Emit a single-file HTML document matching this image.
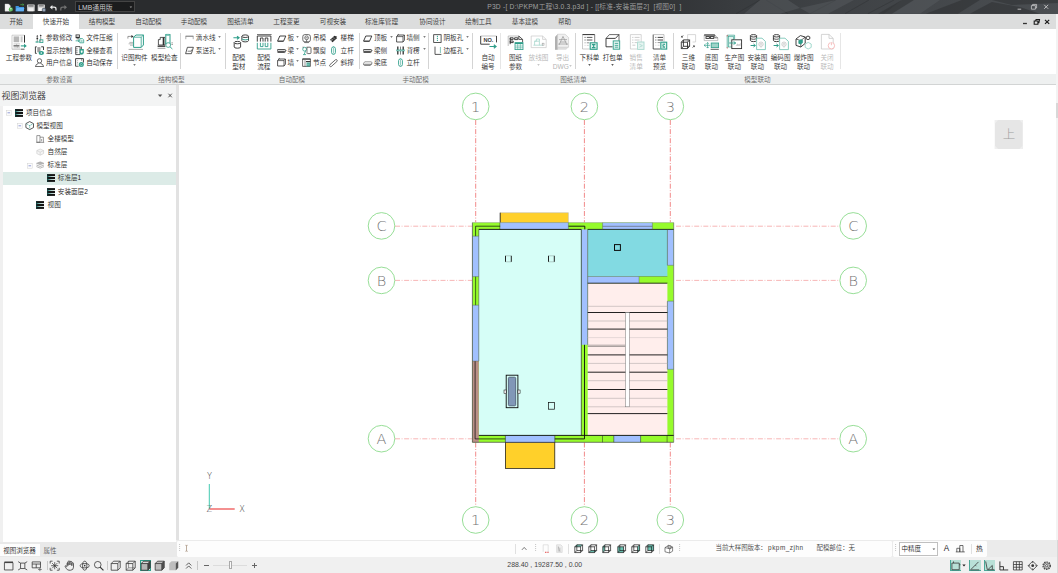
<!DOCTYPE html>
<html lang="zh-CN">
<head>
<meta charset="utf-8">
<title>P3D - PKPM</title>
<style>
html,body{margin:0;padding:0;background:#f0f0f0;}
body{width:1058px;height:573px;overflow:hidden;position:relative;font-family:"Liberation Sans","Noto Sans CJK SC",sans-serif;-webkit-font-smoothing:antialiased;}
#app{position:absolute;left:0;top:0;width:1058px;height:573px;overflow:hidden;}
.b{position:absolute;display:block;overflow:visible;}
.t{position:absolute;white-space:nowrap;line-height:1;letter-spacing:0;font-weight:350;}
.t.c{transform:translate(-50%,-50%);}
.t.l{transform:translate(0,-50%);}
</style>
</head>
<body>
<div id="app">
<div id="titlebar">
<div class="b " style="left:0px;top:0px;width:1058px;height:13.7px;background:#2a2c2e;"></div>
<div class="b " style="left:600px;top:0px;width:458px;height:13.7px;background:linear-gradient(to right, rgba(80,84,88,0) 0%, rgba(70,74,78,.55) 30%, rgba(80,84,88,.85) 100%);"></div>
<svg class="b" style="left:640px;top:0px" width="418" height="13.7" viewBox="0 0 418 13.7">
<g stroke="#2c2e30" stroke-width=".5" opacity=".8" fill="none">
<path d="M96,13.700l24,-13.700M126,0l22,13.700M170,13.700l26,-13.700M205,13.700l24,-13.700M228,13.700l26,-13.700"/>
</g>
<g fill="#5a5e62" opacity=".45">
<polygon points="120,0 148,0 160,8 140,13.700 104,13.700"/>
<polygon points="160,8 196,0 214,0 188,13.700 170,13.700"/>
<polygon points="262,0 300,0 280,13.700 244,13.700"/>
</g>
<g fill="#2e3032" opacity=".55">
<polygon points="238,13.700 262,0 274,0 252,13.700"/>
<polygon points="286,13.700 322,0 340,0 318,13.700"/>
<polygon points="330,13.700 352,2 380,7 400,13.700"/>
<polygon points="352,0 418,0 418,3 372,5"/>
</g>
</svg>
<svg class="b" style="left:4px;top:2.6px" width="66" height="10" viewBox="0 0 66 10">
<path d="M1,1h3.600l1.800,1.800v5.400h-5.400z" fill="#f4f4f4" stroke="#c8c8c8" stroke-width=".4"/>
<circle cx="6.900" cy="6.400" r="2.100" fill="#4db04a"/><path d="M6.900,7.600v-2.400m-1,.9l1,-1l1,1" stroke="#fff" stroke-width=".5" fill="none"/>
<path d="M11.600,2.900h2.800l.9,1h4.700v4.400h-8.400z" fill="#3f97e6"/><path d="M12.600,4.900h7.800l-1,3.400h-7.800z" fill="#62b0f4"/>
<path d="M16.300,1.700h3.400m-1.100,-1l1.200,1l-1.200,1" stroke="#4db04a" stroke-width=".7" fill="none"/>
<rect x="23.100" y="1.400" width="7.600" height="6.800" rx=".5" fill="#d4d4d4"/>
<rect x="24.200" y="1.400" width="5.400" height="2.400" fill="#8a8a8a"/>
<rect x="24.400" y="5.200" width="5" height="3" fill="#f2f2f2"/>
<rect x="33.700" y="1.400" width="7.200" height="6.600" rx=".5" fill="#d4d4d4"/>
<rect x="34.700" y="1.400" width="5" height="2.200" fill="#8a8a8a"/>
<rect x="34.900" y="5" width="3.600" height="3" fill="#f2f2f2"/>
<circle cx="40" cy="7" r="1.900" fill="#7a8ea6" stroke="#2a2c2e" stroke-width=".4"/><circle cx="40" cy="7" r=".7" fill="#d8d8d8"/>
<path d="M47,4.200h3q2,0 2,1.800v1.400" stroke="#ececec" stroke-width="1.200" fill="none"/>
<path d="M48.400,2l-2.600,2.200l2.600,2.200z" fill="#ececec"/>
<path d="M61.800,4.200h-3q-2,0 -2,1.800v1.400" stroke="#727272" stroke-width="1.200" fill="none"/>
<path d="M60.400,2l2.600,2.200l-2.600,2.200z" fill="#727272"/>
</svg>
<div class="b " style="left:75.2px;top:1.3px;width:59.8px;height:10.9px;background:#1b1c1d;border:0.5px solid #444;box-sizing:border-box"></div>
<div class="t l " style="left:78.2px;top:7.5px;font-size:6.8px;color:#d0d0d0;">LMB通用版</div>
<svg class="b" style="left:128.5px;top:6px" width="4" height="3" viewBox="0 0 4 3"><path d="M0.6,0.6l1.3,1.4l1.3,-1.4z" fill="#9a9a9a"/></svg>
<div class="t c ttl" style="left:584.4px;top:6.5px;font-size:6.7px;color:#a0a0a0;letter-spacing:.22px;">P3D -[ D:\PKPM工程\3.0.3.p3d ] - [[标准-安装面层2]&nbsp; [视图0]&nbsp; ]</div>
<svg class="b" style="left:1014px;top:2px" width="40" height="10" viewBox="0 0 40 10">
<path d="M3.6,7.2h3.6" stroke="#c8c8c8" stroke-width=".9"/>
<path d="M17.4,3.6h4v3.6h-4z M18.6,3.6v-1.2h4v3.6h-1.2" stroke="#c8c8c8" stroke-width=".8" fill="none"/>
<path d="M30.2,2.8l4,4m0,-4l-4,4" stroke="#c8c8c8" stroke-width=".9"/>
</svg>
</div>
<div id="tabs">
<div class="b " style="left:0px;top:13.7px;width:1058px;height:15px;background:#dcdddd;"></div>
<div class="b " style="left:33px;top:14.4px;width:46px;height:14.4px;background:#ffffff;"></div>
<div class="t c " style="left:16px;top:21.8px;font-size:6.6px;color:#333;">开始</div>
<div class="t c " style="left:56px;top:21.8px;font-size:6.6px;color:#333;">快速开始</div>
<div class="t c " style="left:102px;top:21.8px;font-size:6.6px;color:#333;">结构模型</div>
<div class="t c " style="left:148.5px;top:21.8px;font-size:6.6px;color:#333;">自动配模</div>
<div class="t c " style="left:194px;top:21.8px;font-size:6.6px;color:#333;">手动配模</div>
<div class="t c " style="left:240.5px;top:21.8px;font-size:6.6px;color:#333;">图纸清单</div>
<div class="t c " style="left:286.5px;top:21.8px;font-size:6.6px;color:#333;">工程变更</div>
<div class="t c " style="left:333px;top:21.8px;font-size:6.6px;color:#333;">可视安装</div>
<div class="t c " style="left:381.5px;top:21.8px;font-size:6.6px;color:#333;">标准库管理</div>
<div class="t c " style="left:432.5px;top:21.8px;font-size:6.6px;color:#333;">协同设计</div>
<div class="t c " style="left:478.5px;top:21.8px;font-size:6.6px;color:#333;">绘制工具</div>
<div class="t c " style="left:525px;top:21.8px;font-size:6.6px;color:#333;">基本建模</div>
<div class="t c " style="left:564.5px;top:21.8px;font-size:6.6px;color:#333;">帮助</div>
<svg class="b" style="left:1018px;top:16px" width="36" height="10" viewBox="0 0 36 10">
<path d="M5,7.500h3.900" stroke="#333" stroke-width="1.300"/>
<path d="M16.200,5h3.700v3.200h-3.700z M17.600,5l.5,-1.500h3.400l-.6,3.200h-1" stroke="#1a1a1a" stroke-width="1.100" fill="none"/>
<path d="M27,3.900l4.200,4m0,-4l-4.200,4" stroke="#1a1a1a" stroke-width="1.200"/>
</svg>
</div>
<div id="ribbon">
<div class="b " style="left:0px;top:28.7px;width:1058px;height:45.3px;background:#ffffff;"></div>
<div class="b " style="left:0px;top:73.9px;width:1058px;height:10.1px;background:#eef0f0;"></div>
<div class="b " style="left:0px;top:84px;width:1058px;height:0.9px;background:#d2d4d4;"></div>
<svg class="b" style="left:10.5px;top:34.5px" width="17" height="15.5" viewBox="0 0 17 15.5">
<path d="M1,14.200v-14h12.500" fill="none" stroke="#b0b0b0" stroke-width=".6"/>
<path d="M1,14.200h9" stroke="#9a9a9a" stroke-width=".6"/><path d="M10,14.200h3.500" stroke="#2e2e2e" stroke-width=".8"/>
<path d="M13.500,.2v7.400" stroke="#2e2e2e" stroke-width="1"/>
<rect x="2.600" y="1.400" width="5.600" height="5.800" fill="#b6b6b6"/>
<rect x="9.600" y="1.400" width="2" height="5.800" fill="#c8c8c8"/>
<path d="M2.500,8.900h6.500M2.500,12.800h6.500M5.600,8.900v1.200M6.400,11.600v1.200" stroke="#9a9a9a" stroke-width=".5"/>
<path d="M2.500,10.900h6" stroke="#2e2e2e" stroke-width="1"/>
<path d="M9.800,10.900h4.600" stroke="#2f9e8a" stroke-width="1.100"/><path d="M13,8.700l2.800,2.200l-2.800,2.200z" fill="#2f9e8a"/>
</svg>
<div class="t c " style="left:19px;top:57.7px;font-size:6.6px;color:#262626;">工程参数</div>
<svg class="b" style="left:35.2px;top:33.6px" width="9" height="9" viewBox="0 0 9 9"><path d="M2.300,1.200v6.600M5.700,1.200v6.600" stroke="#2e2e2e" stroke-width=".5"/><path d="M1.300,2.600l1,-1.400l1,1.400zM4.700,2l1,-1.400l1,1.400z" fill="#2e2e2e"/><rect x="1.500" y="3.800" width="1.600" height="1.400" fill="#2e2e2e"/><path d="M.6,7.400h3v1.200h-3z" fill="#2f9e8a"/><rect x="4.700" y="5.800" width="3.200" height="2.800" fill="none" stroke="#2f9e8a" stroke-width=".8"/></svg>
<div class="t l " style="left:46px;top:38.2px;font-size:6.6px;color:#262626;">参数修改</div>
<svg class="b" style="left:35.2px;top:46.0px" width="9" height="9" viewBox="0 0 9 9"><path d="M1.700,.8h-1.300v6.600h1.300" stroke="#2e2e2e" stroke-width=".9" fill="none"/><rect x="2.400" y="1.200" width="3" height="5" fill="#8c8c8c"/><path d="M3.300,1.200v5M4.400,1.200v5" stroke="#c8c8c8" stroke-width=".4"/><path d="M6.200,.8h2.300v3.200" stroke="#2e2e2e" stroke-width=".9" fill="none"/><ellipse cx="6.300" cy="7" rx="2.700" ry="1.900" fill="#2f9e8a"/><circle cx="6.300" cy="7" r=".8" fill="#fff"/></svg>
<div class="t l " style="left:46px;top:50.6px;font-size:6.6px;color:#262626;">显示控制</div>
<svg class="b" style="left:35.2px;top:58.1px" width="9" height="9" viewBox="0 0 9 9"><circle cx="4.500" cy="2.900" r="2.200" fill="none" stroke="#2e2e2e" stroke-width=".7"/><path d="M.5,8.500q.2,-2.300 2.600,-2.900l.6,-1M8.500,8.500q-.2,-2.300 -2.600,-2.900l-.6,-1M.3,8.500h8.400" fill="none" stroke="#2e2e2e" stroke-width=".7"/></svg>
<div class="t l " style="left:46px;top:62.7px;font-size:6.6px;color:#262626;">用户信息</div>
<svg class="b" style="left:75.39999999999999px;top:33.6px" width="9" height="9" viewBox="0 0 9 9"><rect x=".6" y=".5" width="4.200" height="3.600" fill="#2e2e2e"/><rect x="1.400" y="1.200" width="2.600" height="1.700" fill="#d8d8d8"/><path d="M1.600,4.800h2.400" stroke="#2e2e2e" stroke-width=".7"/><path d="M.6,6.800h3.600m-1.200,-1.100l1.300,1.100l-1.300,1.100" stroke="#2f9e8a" stroke-width=".8" fill="none"/><path d="M4.800,4.600h2.600l1.300,1.200v3h-3.900z" fill="#fff" stroke="#2f9e8a" stroke-width=".8"/><path d="M6,6.400h1.600M6,7.600h1.600" stroke="#2f9e8a" stroke-width=".5"/></svg>
<div class="t l " style="left:86.2px;top:38.2px;font-size:6.6px;color:#262626;">文件压缩</div>
<svg class="b" style="left:75.39999999999999px;top:46.0px" width="9" height="9" viewBox="0 0 9 9"><path d="M.7,.6h4.400v8h-4.400z" stroke="#2e2e2e" stroke-width=".8" fill="#fff"/><path d="M.7,2.800h2M.7,4.800h2M.7,6.700h2" stroke="#2e2e2e" stroke-width=".5"/><path d="M6.500,.6v2.400" stroke="#2e2e2e" stroke-width=".7"/><path d="M4.600,3h4.200v3.400q0,1.600 -2.100,2.400q-2.100,-.8 -2.100,-2.400z" fill="#2f9e8a"/><path d="M5.800,4.400h1.800v1.800l-.9,.9l-.9,-.9z" fill="#fff"/></svg>
<div class="t l " style="left:86.2px;top:50.6px;font-size:6.6px;color:#262626;">全楼查看</div>
<svg class="b" style="left:75.39999999999999px;top:58.1px" width="9" height="9" viewBox="0 0 9 9"><path d="M.6,8.300v-7.700h7.800v4" stroke="#2e2e2e" stroke-width=".9" fill="none"/><path d="M.6,8.300h3" stroke="#2e2e2e" stroke-width=".7"/><path d="M2.600,2.400v5" stroke="#2e2e2e" stroke-width=".5" stroke-dasharray=".8 .8"/><path d="M6.600,.8v2" stroke="#2e2e2e" stroke-width=".5"/><circle cx="6.300" cy="6.600" r="2.500" fill="#2f9e8a"/><path d="M5.200,6.600a1.100,1.100 0 0 1 2.000,-.600M7.400,6.700a1.100,1.100 0 0 1 -2.000,.600" stroke="#fff" stroke-width=".5" fill="none"/></svg>
<div class="t l " style="left:86.2px;top:62.7px;font-size:6.6px;color:#262626;">自动保存</div>
<div class="b " style="left:117.35px;top:33px;width:0.6px;height:35.5px;background:#d4d4d4;"></div>
<svg class="b" style="left:126.5px;top:34px" width="18" height="16" viewBox="0 0 18 16">
<path d="M6.600,3.200l2.400,-2.200h7.400v10l-2.200,2.400h-7.600z" fill="#fff" stroke="#2f9e8a" stroke-width="1"/>
<path d="M6.600,3.200h7.600l2.200,-2.200M14.200,3.200v10.200" stroke="#2f9e8a" stroke-width=".8" fill="none"/>
<path d="M.9,4.600v-2.200h4" stroke="#555" stroke-width=".6" fill="none"/>
<path d="M4.400,.9l2.200,1.500l-2.200,1.500z" fill="#2e2e2e"/>
<path d="M2.400,8.400h3.600M1.600,9.800h4.400M3,11.200h3" stroke="#9a9a9a" stroke-width=".7"/>
<path d="M1.600,15.400h14.400" stroke="#8a8a8a" stroke-width=".7"/>
</svg>
<div class="t c " style="left:134.5px;top:57.7px;font-size:6.6px;color:#262626;">识图构件</div>
<svg class="b" style="left:133.0px;top:64px" width="3" height="2" viewBox="0 0 3 2"><path d="M0.2,0.3h2.6l-1.3,1.5z" fill="#555"/></svg>
<svg class="b" style="left:155.5px;top:34px" width="18" height="16" viewBox="0 0 18 16">
<path d="M2.400,11v-5.400h1.800v-2.200h4.800v7.600z" fill="#fff" stroke="#2e2e2e" stroke-width=".8"/>
<path d="M7.400,3.400v7.600" stroke="#2e2e2e" stroke-width="1.400"/>
<path d="M1.600,12.200h7.800" stroke="#2e2e2e" stroke-width="1.300"/><path d="M1.600,14.300h7.800" stroke="#777" stroke-width=".7"/>
<rect x="9.800" y=".6" width="4.200" height="9" fill="#fff" stroke="#2f9e8a" stroke-width="1"/>
<ellipse cx="11.900" cy=".9" rx="2.100" ry=".6" fill="#bfe6de" stroke="#2f9e8a" stroke-width=".5"/>
<circle cx="12.200" cy="11" r="2.400" fill="#fff" fill-opacity=".85" stroke="#2f9e8a" stroke-width=".8"/>
<path d="M14,12.800l2.400,2.200" stroke="#2f9e8a" stroke-width=".9"/>
<path d="M16.100,8.400v3" stroke="#2e2e2e" stroke-width=".7" stroke-dasharray="1 .6"/>
</svg>
<div class="t c " style="left:164.3px;top:57.7px;font-size:6.6px;color:#262626;">模型检查</div>
<div class="b " style="left:180.25px;top:33px;width:0.6px;height:35.5px;background:#d4d4d4;"></div>
<svg class="b" style="left:184.6px;top:33.6px" width="9" height="9" viewBox="0 0 9 9"><path d="M.6,2.200h7.800" stroke="#2e2e2e" stroke-width=".7" fill="none"/><path d="M.8,2.200v3M8.200,2.200v3" stroke="#777" stroke-width=".6" fill="none"/></svg>
<div class="t l " style="left:195.8px;top:38.2px;font-size:6.6px;color:#262626;">滴水线</div>
<svg class="b" style="left:218.2px;top:35.900000000000006px" width="3" height="2" viewBox="0 0 3 2"><path d="M0.2,0.3h2.6l-1.3,1.5z" fill="#555"/></svg>
<svg class="b" style="left:184.6px;top:46.0px" width="9" height="9" viewBox="0 0 9 9"><path d="M2.400,1.300h6l-2,6.400h-5.800z" stroke="#2e2e2e" stroke-width=".8" fill="none"/><path d="M2.600,5.200h3.600l.5,-1.600" stroke="#2e2e2e" stroke-width=".6" fill="none"/></svg>
<div class="t l " style="left:195.8px;top:50.6px;font-size:6.6px;color:#262626;">泵送孔</div>
<svg class="b" style="left:218.2px;top:48.300000000000004px" width="3" height="2" viewBox="0 0 3 2"><path d="M0.2,0.3h2.6l-1.3,1.5z" fill="#555"/></svg>
<div class="b " style="left:224.95px;top:33px;width:0.6px;height:35.5px;background:#d4d4d4;"></div>
<svg class="b" style="left:230.5px;top:34px" width="18" height="16" viewBox="0 0 18 16">
<path d="M2.400,3.800h5.600m-2,-1.600l2.100,1.600l-2.100,1.600" stroke="#2f9e8a" stroke-width="1.100" fill="none"/>
<path d="M10.900,2.200v4.400a3.300,1.300 0 0 0 6.600,0v-4.400" fill="#fff" stroke="#2e2e2e" stroke-width=".9"/>
<ellipse cx="14.200" cy="2.200" rx="3.300" ry="1.300" fill="#fff" stroke="#2e2e2e" stroke-width=".9"/>
<path d="M10.900,4.600a3.300,1.300 0 0 0 6.600,0" fill="none" stroke="#2f9e8a" stroke-width="1"/>
<path d="M3.200,8.600v4.400a3.200,1.200 0 0 0 6.400,0v-4.400" fill="#fff" stroke="#2e2e2e" stroke-width=".9"/>
<ellipse cx="6.400" cy="8.600" rx="3.200" ry="1.200" fill="#fff" stroke="#2e2e2e" stroke-width=".9"/>
</svg>
<div class="t c " style="left:238.8px;top:57.7px;font-size:6.6px;color:#262626;">配模</div>
<div class="t c " style="left:238.8px;top:67.1px;font-size:6.6px;color:#262626;">型材</div>
<svg class="b" style="left:255.5px;top:34px" width="17" height="16" viewBox="0 0 17 16">
<path d="M1,.6h14.600" stroke="#2e2e2e" stroke-width=".7"/>
<path d="M1.300,7.600v-5.600h13.600v5.600M4.400,7.600v-3.600h2.600v3.600M9.200,7.600v-3.600h2.600v3.600" fill="none" stroke="#2e2e2e" stroke-width=".9"/>
<path d="M1.300,8.800v6.200h13.600v-6.200M4.400,8.800v3.800h2.600v-3.800M9.200,8.800v3.800h2.600v-3.800" fill="none" stroke="#2f9e8a" stroke-width=".9"/>
</svg>
<div class="t c " style="left:263.8px;top:57.7px;font-size:6.6px;color:#262626;">配模</div>
<div class="t c " style="left:263.8px;top:67.1px;font-size:6.6px;color:#262626;">流程</div>
<svg class="b" style="left:276.6px;top:33.6px" width="9" height="9" viewBox="0 0 9 9"><path d="M2.800,2h6l-2.200,5h-6z" stroke="#2e2e2e" stroke-width=".9" fill="#fff"/><path d="M.6,7.500h6" stroke="#2e2e2e" stroke-width=".7"/></svg>
<div class="t l " style="left:287.4px;top:38.2px;font-size:6.6px;color:#262626;">板</div>
<svg class="b" style="left:296.1px;top:35.900000000000006px" width="3" height="2" viewBox="0 0 3 2"><path d="M0.2,0.3h2.6l-1.3,1.5z" fill="#555"/></svg>
<svg class="b" style="left:276.6px;top:46.0px" width="9" height="9" viewBox="0 0 9 9"><path d="M.5,3.600h7.400q1,.2 1,.9t-1,.9h-7.400" stroke="#2e2e2e" stroke-width=".9" fill="#fff"/><path d="M.5,3.600v1.800" stroke="#2e2e2e" stroke-width=".6"/><path d="M.5,6.500h7.200l1,-.8" stroke="#2e2e2e" stroke-width=".8" fill="none"/></svg>
<div class="t l " style="left:287.4px;top:50.6px;font-size:6.6px;color:#262626;">梁</div>
<svg class="b" style="left:296.1px;top:48.300000000000004px" width="3" height="2" viewBox="0 0 3 2"><path d="M0.2,0.3h2.6l-1.3,1.5z" fill="#555"/></svg>
<svg class="b" style="left:276.6px;top:58.1px" width="9" height="9" viewBox="0 0 9 9"><path d="M.6,2.600l1.400,-1.600h6.400v5.200l-1.400,1.800h-6.400z" stroke="#2e2e2e" stroke-width=".8" fill="#fff"/><path d="M.6,2.600h6.400l1.400,-1.600M7,2.600v5.400" stroke="#2e2e2e" stroke-width=".7" fill="none"/><path d="M1,1.400l1.400,-1l.8,.8" stroke="#2e2e2e" stroke-width=".6" fill="none"/></svg>
<div class="t l " style="left:287.4px;top:62.7px;font-size:6.6px;color:#262626;">墙</div>
<svg class="b" style="left:296.1px;top:60.400000000000006px" width="3" height="2" viewBox="0 0 3 2"><path d="M0.2,0.3h2.6l-1.3,1.5z" fill="#555"/></svg>
<svg class="b" style="left:302.0px;top:33.6px" width="9" height="9" viewBox="0 0 9 9"><rect x=".8" y=".6" width="7.600" height="7.200" rx="2" fill="none" stroke="#2e2e2e" stroke-width=".7"/><circle cx="4.600" cy="3.800" r="1.900" fill="none" stroke="#2e2e2e" stroke-width=".6"/><path d="M3.400,3.800h2.400M2.600,7.800v.8h4v-.8M4.600,5.700v2" stroke="#2e2e2e" stroke-width=".6" fill="none"/></svg>
<div class="t l " style="left:313px;top:38.2px;font-size:6.6px;color:#262626;">吊模</div>
<svg class="b" style="left:302.0px;top:46.0px" width="9" height="9" viewBox="0 0 9 9"><circle cx="2.600" cy="3.200" r="1.900" fill="none" stroke="#2f9e8a" stroke-width=".8"/><path d="M3.600,4.800l-1.400,3.600M1,8.600h3" stroke="#2f9e8a" stroke-width=".8"/><path d="M.6,1.200h1M4.600,1.200h3.400q1,0 1,1v4.400q0,1 -1,1h-2.600" stroke="#2e2e2e" stroke-width=".7" fill="none"/><path d="M5,1.200v6.400" stroke="#2e2e2e" stroke-width=".6"/></svg>
<div class="t l " style="left:313px;top:50.6px;font-size:6.6px;color:#262626;">飘窗</div>
<svg class="b" style="left:302.0px;top:58.1px" width="9" height="9" viewBox="0 0 9 9"><path d="M.6,.8h7.800v7.600h-7.800z" stroke="#2e2e2e" stroke-width=".7" fill="none"/><path d="M.6,1.200h7.800" stroke="#2e2e2e" stroke-width=".9"/><path d="M3,2.200v6.200" stroke="#2e2e2e" stroke-width=".5"/><path d="M4,3.600h4.400" stroke="#2e2e2e" stroke-width="1.100"/><rect x="4.600" y="4.600" width="3.200" height="3.800" fill="#2f9e8a"/><path d="M5.600,5.400v2.200M6.700,5.400v2.200" stroke="#fff" stroke-width=".4"/></svg>
<div class="t l " style="left:313px;top:62.7px;font-size:6.6px;color:#262626;">节点</div>
<svg class="b" style="left:329.40000000000003px;top:33.6px" width="9" height="9" viewBox="0 0 9 9"><path d="M.8,6l4.600,-4.200l2.800,1l-4.600,4.200z" fill="#2e2e2e"/><path d="M2.400,7.800l4.600,-4.200l1.200,.4l-4.600,4.200z" fill="#2e2e2e"/><path d="M2,5l2.200,.8M3.600,3.600l2.200,.8" stroke="#fff" stroke-width=".4"/></svg>
<div class="t l " style="left:340.6px;top:38.2px;font-size:6.6px;color:#262626;">楼梯</div>
<svg class="b" style="left:329.40000000000003px;top:46.0px" width="9" height="9" viewBox="0 0 9 9"><rect x="2.600" y="1" width="3.800" height="7.200" rx="1.600" fill="#fff" stroke="#2f9e8a" stroke-width=".9"/><path d="M4.500,2v5.200M4.500,.2v.8M4.500,8.200v.6" stroke="#2f9e8a" stroke-width=".5"/></svg>
<div class="t l " style="left:340.6px;top:50.6px;font-size:6.6px;color:#262626;">立杆</div>
<svg class="b" style="left:329.40000000000003px;top:58.1px" width="9" height="9" viewBox="0 0 9 9"><path d="M1,6.600l5.400,-4.800q1,-.6 1.600,.2t-.2,1.600l-5.400,4.800q-1,.6 -1.600,-.2t.2,-1.600z" stroke="#2e2e2e" stroke-width=".7" fill="#fff"/></svg>
<div class="t l " style="left:340.6px;top:62.7px;font-size:6.6px;color:#262626;">斜撑</div>
<div class="b " style="left:358.55px;top:33px;width:0.6px;height:35.5px;background:#d4d4d4;"></div>
<svg class="b" style="left:362.8px;top:33.6px" width="9" height="9" viewBox="0 0 9 9"><path d="M2.800,2h6l-2.200,5h-6z" stroke="#2e2e2e" stroke-width=".9" fill="#fff"/><path d="M.6,7.500h6" stroke="#2e2e2e" stroke-width=".7"/></svg>
<div class="t l " style="left:374px;top:38.2px;font-size:6.6px;color:#262626;">顶板</div>
<svg class="b" style="left:389.7px;top:35.900000000000006px" width="3" height="2" viewBox="0 0 3 2"><path d="M0.2,0.3h2.6l-1.3,1.5z" fill="#555"/></svg>
<svg class="b" style="left:362.8px;top:46.0px" width="9" height="9" viewBox="0 0 9 9"><path d="M.5,3.600h7.400q1,.2 1,.9t-1,.9h-7.400" stroke="#2e2e2e" stroke-width=".9" fill="#fff"/><path d="M.5,3.600v1.800" stroke="#2e2e2e" stroke-width=".6"/><path d="M.5,6.500h7.200l1,-.8" stroke="#2e2e2e" stroke-width=".8" fill="none"/></svg>
<div class="t l " style="left:374px;top:50.6px;font-size:6.6px;color:#262626;">梁侧</div>
<svg class="b" style="left:362.8px;top:58.1px" width="9" height="9" viewBox="0 0 9 9"><path d="M.5,5.400l1.200,-1.600h6.400q.8,.1 .8,.8t-1.200,1.600h-6.400q-.8,-.1 -.8,-.8z" stroke="#555" stroke-width=".6" fill="#fff"/><path d="M.5,6.400q.2,.8 1,.8h6l1.400,-1.600" stroke="#2e2e2e" stroke-width=".8" fill="none"/></svg>
<div class="t l " style="left:374px;top:62.7px;font-size:6.6px;color:#262626;">梁底</div>
<svg class="b" style="left:395.6px;top:33.6px" width="9" height="9" viewBox="0 0 9 9"><path d="M.6,2.600l1.400,-1.600h6.400v5.200l-1.400,1.800h-6.400z" stroke="#2e2e2e" stroke-width=".8" fill="#fff"/><path d="M.6,2.600h6.400l1.400,-1.600M7,2.600v5.400" stroke="#2e2e2e" stroke-width=".7" fill="none"/><path d="M1,1.400l1.400,-1l.8,.8" stroke="#2e2e2e" stroke-width=".6" fill="none"/></svg>
<div class="t l " style="left:406.4px;top:38.2px;font-size:6.6px;color:#262626;">墙侧</div>
<svg class="b" style="left:422.5px;top:35.900000000000006px" width="3" height="2" viewBox="0 0 3 2"><path d="M0.2,0.3h2.6l-1.3,1.5z" fill="#555"/></svg>
<svg class="b" style="left:395.6px;top:46.0px" width="9" height="9" viewBox="0 0 9 9"><path d="M1.800,.6v8M7.200,.6v8" stroke="#2e2e2e" stroke-width="1.300"/><path d="M4.500,.6v8" stroke="#2e2e2e" stroke-width=".6"/><path d="M.2,4.400h8.600" stroke="#2f9e8a" stroke-width="1.600"/><path d="M.2,4.400h8.600" stroke="#fff" stroke-width=".4"/></svg>
<div class="t l " style="left:406.4px;top:50.6px;font-size:6.6px;color:#262626;">背楞</div>
<svg class="b" style="left:422.5px;top:48.300000000000004px" width="3" height="2" viewBox="0 0 3 2"><path d="M0.2,0.3h2.6l-1.3,1.5z" fill="#555"/></svg>
<svg class="b" style="left:395.6px;top:58.1px" width="9" height="9" viewBox="0 0 9 9"><rect x="2.600" y="1" width="3.800" height="7.200" rx="1.600" fill="#fff" stroke="#2f9e8a" stroke-width=".9"/><path d="M4.500,2v5.200M4.500,.2v.8M4.500,8.200v.6" stroke="#2f9e8a" stroke-width=".5"/></svg>
<div class="t l " style="left:406.4px;top:62.7px;font-size:6.6px;color:#262626;">立杆</div>
<div class="b " style="left:427.95px;top:33px;width:0.6px;height:35.5px;background:#d4d4d4;"></div>
<svg class="b" style="left:432.8px;top:33.6px" width="9" height="9" viewBox="0 0 9 9"><rect x=".7" y=".7" width="7.400" height="7.800" fill="#fff" stroke="#2e2e2e" stroke-width=".8"/><path d="M4.400,1.800v5.800" stroke="#2f9e8a" stroke-width="1" stroke-dasharray="1.200 .8"/></svg>
<div class="t l " style="left:443.5px;top:38.2px;font-size:6.6px;color:#262626;">阴板孔</div>
<svg class="b" style="left:466.1px;top:35.900000000000006px" width="3" height="2" viewBox="0 0 3 2"><path d="M0.2,0.3h2.6l-1.3,1.5z" fill="#555"/></svg>
<svg class="b" style="left:432.8px;top:46.0px" width="9" height="9" viewBox="0 0 9 9"><path d="M2,.6v7.800h6.400" fill="none" stroke="#2e2e2e" stroke-width=".8"/><path d="M7.400,1.400v6" stroke="#2f9e8a" stroke-width="1" stroke-dasharray="1.200 .8"/></svg>
<div class="t l " style="left:443.5px;top:50.6px;font-size:6.6px;color:#262626;">边框孔</div>
<svg class="b" style="left:466.1px;top:48.300000000000004px" width="3" height="2" viewBox="0 0 3 2"><path d="M0.2,0.3h2.6l-1.3,1.5z" fill="#555"/></svg>
<div class="b " style="left:471.95px;top:33px;width:0.6px;height:35.5px;background:#d4d4d4;"></div>
<div class="b " style="left:500.4px;top:33px;width:0.5px;height:35.5px;background:#e6e6e6;"></div>
<svg class="b" style="left:479.5px;top:34px" width="17" height="16" viewBox="0 0 17 16"><path d="M.6,2h16" stroke="#9a9a9a" stroke-width=".6"/>
<path d="M.7,2v8.200h9M16.500,2v6.400" fill="none" stroke="#2e2e2e" stroke-width=".9"/>
<text x="8.400" y="8.300" font-size="5.600" font-family="Liberation Sans, sans-serif" font-weight="bold" text-anchor="middle" fill="#3a3a3a">NO.</text>
<path d="M9.400,12.500h6.600m-2.200,-1.800l2.300,1.800l-2.300,1.800" stroke="#2f9e8a" stroke-width="1.100" fill="none"/></svg>
<div class="t c " style="left:488px;top:57.7px;font-size:6.6px;color:#333;">自动</div>
<div class="t c " style="left:488px;top:67.1px;font-size:6.6px;color:#333;">编号</div>
<svg class="b" style="left:507.0px;top:34px" width="17" height="16" viewBox="0 0 17 16"><path d="M1.200,12v-10h10.600" fill="none" stroke="#9a9a9a" stroke-width=".6"/>
<path d="M11.800,2l3.800,3.400v3M11.800,2v3.400h3.800" fill="none" stroke="#2e2e2e" stroke-width=".8"/>
<path d="M3.200,3.800h3v1.600h-3zM3.200,7h3v1.600h-3zM3.200,3.800v6.400M7.600,3.800h3.200v1.800h-3.200z" fill="none" stroke="#2e2e2e" stroke-width=".9"/>
<rect x="8" y="8.600" width="8" height="7" fill="#fff" stroke="#2f9e8a" stroke-width=".8"/>
<path d="M8,9.400h8" stroke="#2f9e8a" stroke-width="1.400"/>
<path d="M8,12h8M8,13.800h8M10.700,9.400v6.200M13.300,9.400v6.200" stroke="#2f9e8a" stroke-width=".5"/></svg>
<div class="t c " style="left:515.5px;top:57.7px;font-size:6.6px;color:#333;">图纸</div>
<div class="t c " style="left:515.5px;top:67.1px;font-size:6.6px;color:#333;">参数</div>
<svg class="b" style="left:530.0px;top:34px" width="17" height="16" viewBox="0 0 17 16"><path d="M1.200,2h11.400l3.600,3.400v8.200h-15z" fill="#fff" stroke="#c8c8c8" stroke-width=".7"/>
<path d="M12.600,2v3.400h3.600" fill="none" stroke="#c8c8c8" stroke-width=".7"/>
<path d="M3.400,11.200h9.600M4.600,11.200v-4h1.800v-2.200h3v2.200M9.400,7.200v4M4.600,7.200h4.800" stroke="#a8d8ce" stroke-width=".8" fill="none"/>
<rect x="12.200" y="9.200" width="1.800" height="2" fill="none" stroke="#a0a0a0" stroke-width=".6"/></svg>
<div class="t c " style="left:538.5px;top:57.7px;font-size:6.6px;color:#b4b4b4;">放线图</div>
<svg class="b" style="left:537.0px;top:64px" width="3" height="2" viewBox="0 0 3 2"><path d="M0.2,0.3h2.6l-1.3,1.5z" fill="#b4b4b4"/></svg>
<svg class="b" style="left:554.0px;top:34px" width="17" height="16" viewBox="0 0 17 16"><path d="M1,3l2.600,-2.800h7.400l3.600,3.400v9.600l-2.600,2.600h-11z" fill="#dcdcdc"/>
<path d="M1,3v12.800h2.600v-15.600z" fill="#b0b0b0"/>
<path d="M3.600,.2h7.400l3.600,3.400v9.600h-11z" fill="#f0f0f0" stroke="#c4c4c4" stroke-width=".5"/>
<path d="M5,11l4,-8.600l4,8.600M6,8h6.400M4.400,10h9.600M5,5.600h8" stroke="#a0a0a0" stroke-width=".8" fill="none"/></svg>
<div class="t c " style="left:562.5px;top:57.7px;font-size:6.6px;color:#b4b4b4;">导出</div>
<div class="t c " style="left:560.9px;top:67.1px;font-size:6.6px;color:#b4b4b4;">DWG</div>
<svg class="b" style="left:568.8px;top:64.5px" width="3" height="2" viewBox="0 0 3 2"><path d="M0.2,0.3h2.6l-1.3,1.5z" fill="#b4b4b4"/></svg>
<div class="b " style="left:575.35px;top:33px;width:0.6px;height:35.5px;background:#d4d4d4;"></div>
<svg class="b" style="left:581.0px;top:34px" width="17" height="16" viewBox="0 0 17 16"><path d="M1.500,.6v14.400h7" fill="none" stroke="#a8a8a8" stroke-width=".6"/>
<path d="M1.500,.6h12.200" stroke="#2e2e2e" stroke-width="1"/><path d="M13.700,.6v8" stroke="#2e2e2e" stroke-width=".6"/>
<path d="M3.600,3.400h.9M3.600,6h.9" stroke="#2e2e2e" stroke-width=".9"/><path d="M5.800,3.400h5.600M5.800,6h5.600" stroke="#2e2e2e" stroke-width=".8"/>
<path d="M3.600,8.800h.9M5.800,8.800h2.400" stroke="#777" stroke-width=".8"/><path d="M3.600,11.400h.9M5.800,11.400h2" stroke="#c8c8c8" stroke-width=".8"/>
<rect x="9.200" y="8.800" width="6.900" height="6.500" fill="#e2f3ef" stroke="#2f9e8a" stroke-width="1.100"/>
<path d="M10.900,10.600h3.500M10.900,13.600h3.500M12.650,10.600v3" stroke="#2f9e8a" stroke-width="1.100"/></svg>
<div class="t c " style="left:589.5px;top:57.7px;font-size:6.6px;color:#262626;">下料单</div>
<svg class="b" style="left:588.0px;top:64px" width="3" height="2" viewBox="0 0 3 2"><path d="M0.2,0.3h2.6l-1.3,1.5z" fill="#262626"/></svg>
<svg class="b" style="left:604.1px;top:34px" width="17" height="16" viewBox="0 0 17 16"><path d="M2,4.400l3.400,-3.800h9.600v9" fill="none" stroke="#2e2e2e" stroke-width=".7"/>
<path d="M2,4.400h9.400l3.600,-3.800M2,4.400v8.400h6.600" fill="none" stroke="#2e2e2e" stroke-width=".9"/>
<rect x="9.200" y="6.900" width="6.500" height="8.300" fill="#e2f3ef" stroke="#2f9e8a" stroke-width=".9"/>
<path d="M10.800,9.400h3.400M10.800,11.400h3.400M10.800,13.200h3.400" stroke="#2f9e8a" stroke-width=".8"/></svg>
<div class="t c " style="left:612.6px;top:57.7px;font-size:6.6px;color:#262626;">打包单</div>
<svg class="b" style="left:611.1px;top:64px" width="3" height="2" viewBox="0 0 3 2"><path d="M0.2,0.3h2.6l-1.3,1.5z" fill="#262626"/></svg>
<svg class="b" style="left:627.7px;top:34px" width="17" height="16" viewBox="0 0 17 16"><path d="M2.400,.6v14.400h6.800M2.400,.6h10.800v7.400" fill="none" stroke="#c4c4c4" stroke-width=".7"/>
<path d="M4.400,3.400h.9M4.400,6h.9M4.400,8.600h.9" stroke="#b0b0b0" stroke-width=".9"/><path d="M6.600,3.400h5M6.600,6h5M6.600,8.600h2.400M4.400,11.200h3" stroke="#c0c0c0" stroke-width=".8"/>
<rect x="9.600" y="8" width="6.400" height="7.400" fill="#e6f4f1" stroke="#a8d8ce" stroke-width=".9"/>
<path d="M11.400,10.200l3,1.500l-3,1.500" stroke="#a8d8ce" stroke-width=".8" fill="none"/></svg>
<div class="t c " style="left:636.2px;top:57.7px;font-size:6.6px;color:#b4b4b4;">销售</div>
<div class="t c " style="left:636.2px;top:67.1px;font-size:6.6px;color:#b4b4b4;">清单</div>
<svg class="b" style="left:651.1px;top:34px" width="17" height="16" viewBox="0 0 17 16"><path d="M2.200,.6v14.400h7" fill="none" stroke="#2e2e2e" stroke-width=".8"/><path d="M2.200,.6h10.800v7" fill="none" stroke="#9a9a9a" stroke-width=".6"/>
<path d="M4.400,3.400h.9M4.400,6h.9" stroke="#2e2e2e" stroke-width=".9"/><path d="M6.600,3.400h5.400M6.600,6h5.400" stroke="#2e2e2e" stroke-width=".9"/>
<path d="M4.400,8.600h.9M6.600,8.600h2.400" stroke="#777" stroke-width=".8"/><path d="M4.400,11.200h.9M6.600,11.200h2" stroke="#c8c8c8" stroke-width=".8"/>
<rect x="9.800" y="8.200" width="5.900" height="6.900" fill="#e2f3ef" stroke="#2f9e8a" stroke-width="1.100"/>
<path d="M11.500,10.200h2.400l-2.400,1.500l2.400,1.500h-2.400" stroke="#2f9e8a" stroke-width=".9" fill="none"/></svg>
<div class="t c " style="left:659.6px;top:57.7px;font-size:6.6px;color:#333;">清单</div>
<div class="t c " style="left:659.6px;top:67.1px;font-size:6.6px;color:#333;">预览</div>
<div class="b " style="left:673.35px;top:33px;width:0.6px;height:35.5px;background:#d4d4d4;"></div>
<svg class="b" style="left:679.9px;top:34px" width="17" height="16" viewBox="0 0 17 16"><path d="M7.600,8V.6h8v7.400h-3" fill="none" stroke="#c8c8c8" stroke-width=".7"/>
<path d="M1.300,8.200h6.200v6.400h-6.200zM3.400,5.900h6.200v6.400h-6.200zM1.300,8.200l2.100,-2.300M7.500,8.200l2.100,-2.300M1.300,14.600l2.100,-2.300M7.500,14.600l2.100,-2.300" fill="none" stroke="#2e2e2e" stroke-width=".9"/>
<path d="M3.200,1.400l-1.600,1.800m0,-1.300v1.300h1.300" stroke="#2e2e2e" stroke-width=".7" fill="none"/>
<path d="M12.600,13.600l1.800,-1.800m0,1.300v-1.300h-1.300" stroke="#2e2e2e" stroke-width=".7" fill="none"/></svg>
<div class="t c " style="left:688.4px;top:57.7px;font-size:6.6px;color:#333;">三维</div>
<div class="t c " style="left:688.4px;top:67.1px;font-size:6.6px;color:#333;">联动</div>
<svg class="b" style="left:702.9px;top:34px" width="17" height="16" viewBox="0 0 17 16"><path d="M1.200,6.600v-5.600h10.600l3,2.800v2.800z" fill="#fff" stroke="#9a9a9a" stroke-width=".6"/>
<path d="M1.200,1h10.600" stroke="#2e2e2e" stroke-width="1.100"/><path d="M11.800,1v2.800h3" stroke="#2e2e2e" stroke-width=".6" fill="none"/>
<rect x="3" y="2.600" width="3.400" height="1.800" fill="#fff" stroke="#2e2e2e" stroke-width=".9"/><rect x="7.400" y="2.600" width="3.400" height="1.800" fill="#fff" stroke="#2e2e2e" stroke-width=".9"/>
<rect x="8.200" y="9" width="7.400" height="4.600" fill="#9fd3c8" stroke="#2f9e8a" stroke-width=".8"/>
<path d="M1.200,11.300h6m-4.600,-1.300l-1.500,1.300l1.500,1.300M4.600,8.600v5.400m-1.100,-4.300l1.100,-1.200l1.100,1.200m-2.200,3.200l1.100,1.200l1.100,-1.200" stroke="#2f9e8a" stroke-width=".7" fill="none"/>
<path d="M7.600,15.300h8.200" stroke="#2e2e2e" stroke-width=".8"/></svg>
<div class="t c " style="left:711.4px;top:57.7px;font-size:6.6px;color:#333;">底图</div>
<div class="t c " style="left:711.4px;top:67.1px;font-size:6.6px;color:#333;">联动</div>
<svg class="b" style="left:725.9px;top:34px" width="17" height="16" viewBox="0 0 17 16"><path d="M1.200,1.200v13M1.200,1.200h7.400v4" stroke="#2f9e8a" stroke-width=".7" fill="none"/>
<path d="M.4,2.200l.8,-1.400l.8,1.400zM.4,13.400l.8,1.400l.8,-1.400z" fill="#e06060"/>
<rect x="2.400" y="2.600" width="5" height="10.400" fill="#e2f3ef" stroke="#2f9e8a" stroke-width=".6"/>
<rect x="5.800" y="5.800" width="9.800" height="8.800" fill="#fff" stroke="#2e2e2e" stroke-width=".9"/>
<path d="M9.600,11.800l2,-2.400l1.400,1.400l1.600,-2v3z" fill="#c8c8c8"/>
<path d="M3.200,9h6.400m-2,-1.500l2.100,1.500l-2.100,1.500" stroke="#2f9e8a" stroke-width=".9" fill="none"/></svg>
<div class="t c " style="left:734.4px;top:57.7px;font-size:6.6px;color:#333;">生产图</div>
<div class="t c " style="left:734.4px;top:67.1px;font-size:6.6px;color:#333;">联动</div>
<svg class="b" style="left:748.9px;top:34px" width="17" height="16" viewBox="0 0 17 16"><path d="M1.400,1.800v4.600a3.100,1.200 0 0 0 6.200,0v-4.600" fill="#fff" stroke="#2e2e2e" stroke-width=".9"/>
<ellipse cx="4.500" cy="1.800" rx="3.100" ry="1.200" fill="#fff" stroke="#2e2e2e" stroke-width=".9"/>
<path d="M1.400,4.100a3.100,1.200 0 0 0 6.200,0" fill="none" stroke="#2e2e2e" stroke-width=".8"/>
<path d="M7.600,4.200h5.400l3.400,3.200v8.200h-8.800z" fill="#fff" stroke="#6cc0b0" stroke-width=".8"/>
<circle cx="12" cy="10.200" r="2.200" fill="none" stroke="#b4b4b4" stroke-width=".6"/><circle cx="12" cy="10.200" r=".9" fill="none" stroke="#b4b4b4" stroke-width=".5"/>
<path d="M12,12.400v1.400" stroke="#b4b4b4" stroke-width=".5"/>
<path d="M1.600,11.500h4.600m-1.700,-1.500l1.900,1.500l-1.900,1.500" stroke="#2f9e8a" stroke-width="1" fill="none"/></svg>
<div class="t c " style="left:757.4px;top:57.7px;font-size:6.6px;color:#333;">安装图</div>
<div class="t c " style="left:757.4px;top:67.1px;font-size:6.6px;color:#333;">联动</div>
<svg class="b" style="left:772.1px;top:34px" width="17" height="16" viewBox="0 0 17 16"><path d="M1.400,1.800v4.600a3.100,1.200 0 0 0 6.200,0v-4.600" fill="#fff" stroke="#2e2e2e" stroke-width=".9"/>
<ellipse cx="4.500" cy="1.800" rx="3.100" ry="1.200" fill="#fff" stroke="#2e2e2e" stroke-width=".9"/>
<path d="M1.400,4.100a3.100,1.200 0 0 0 6.200,0" fill="none" stroke="#2e2e2e" stroke-width=".8"/>
<path d="M7.600,4.200h5.400l3.400,3.200v8.200h-8.800z" fill="#fff" stroke="#6cc0b0" stroke-width=".8"/>
<circle cx="12" cy="10.200" r="2.200" fill="none" stroke="#b4b4b4" stroke-width=".6"/><circle cx="12" cy="10.200" r=".9" fill="none" stroke="#b4b4b4" stroke-width=".5"/>
<path d="M12,12.400v1.400" stroke="#b4b4b4" stroke-width=".5"/>
<path d="M1.600,11.500h4.600m-1.700,-1.500l1.900,1.500l-1.900,1.500" stroke="#2f9e8a" stroke-width="1" fill="none"/></svg>
<div class="t c " style="left:780.6px;top:57.7px;font-size:6.6px;color:#333;">编码图</div>
<div class="t c " style="left:780.6px;top:67.1px;font-size:6.6px;color:#333;">联动</div>
<svg class="b" style="left:795.1px;top:34px" width="17" height="16" viewBox="0 0 17 16"><path d="M1,5l4.400,-3.400l4.800,1.400v6.400l-4.400,3.600l-4.800,-1.600z" fill="#fff" stroke="#2e2e2e" stroke-width=".9"/>
<path d="M1,5l4.800,1.600l4.400,-3.600M5.800,6.600v6.400" fill="none" stroke="#2e2e2e" stroke-width=".7"/>
<path d="M3.400,6.800l2.400,-1.600l2,.8v2.800l-2.200,1.600l-2.200,-.8z" fill="#2f9e8a"/>
<path d="M13,2l1.800,.9v1.900l-1.800,.9l-1.800,-.9v-1.900z" fill="#fff" stroke="#2e2e2e" stroke-width=".9"/>
<path d="M13.200,8.400l3,1.600v3.400l-3,1.600l-3,-1.600v-3.400z" fill="#fff" stroke="#8ccfc2" stroke-width=".8"/></svg>
<div class="t c " style="left:803.6px;top:57.7px;font-size:6.6px;color:#333;">爆炸图</div>
<div class="t c " style="left:803.6px;top:67.1px;font-size:6.6px;color:#333;">联动</div>
<svg class="b" style="left:818.5px;top:34px" width="17" height="16" viewBox="0 0 17 16"><path d="M2.400,.4h7.600l4.200,4v10.600h-11.800z" fill="#fff" stroke="#c4c4c4" stroke-width=".7"/>
<path d="M10,.4v4h4.200" fill="none" stroke="#c4c4c4" stroke-width=".7"/>
<circle cx="12.400" cy="11.700" r="3.200" fill="#fff" stroke="#f4b0b0" stroke-width=".8"/>
<path d="M12.400,8v3.400" stroke="#fff" stroke-width="1.800"/><path d="M12.400,8.200v3" stroke="#f4b0b0" stroke-width=".8"/></svg>
<div class="t c " style="left:827px;top:57.7px;font-size:6.6px;color:#b8b8b8;">关闭</div>
<div class="t c " style="left:827px;top:67.1px;font-size:6.6px;color:#b8b8b8;">联动</div>
<div class="b " style="left:840px;top:33px;width:0.6px;height:35.5px;background:#e6e6e6;"></div>
<div class="t c " style="left:59.4px;top:79.7px;font-size:6.6px;color:#666;">参数设置</div>
<div class="t c " style="left:171.4px;top:79.7px;font-size:6.6px;color:#666;">结构模型</div>
<div class="t c " style="left:292px;top:79.7px;font-size:6.6px;color:#666;">自动配模</div>
<div class="t c " style="left:415.6px;top:79.7px;font-size:6.6px;color:#666;">手动配模</div>
<div class="t c " style="left:573.4px;top:79.7px;font-size:6.6px;color:#666;">图纸清单</div>
<div class="t c " style="left:757.4px;top:79.7px;font-size:6.6px;color:#666;">模型联动</div>
</div>
<div id="leftpanel">
<div class="b " style="left:0px;top:84.9px;width:179.4px;height:488.1px;background:#f0f0f0;"></div>
<div class="b " style="left:0px;top:84.9px;width:176px;height:20.7px;background:#f3f4f4;"></div>
<div class="t l " style="left:1.6px;top:95.8px;font-size:8.9px;color:#333;">视图浏览器</div>
<svg class="b" style="left:157px;top:92.6px" width="18" height="6" viewBox="0 0 18 6"><path d="M.9,1.500h4.400l-2.200,2.500z" fill="#555"/><path d="M11.400,.7l3.400,3.600m0,-3.600l-3.400,3.600" stroke="#444" stroke-width=".9"/></svg>
<div class="b " style="left:3px;top:105.9px;width:173px;height:436.1px;background:#ffffff;"></div>
<div class="b " style="left:176px;top:84.9px;width:2.6px;height:455px;background:#e2e2e2;"></div>
<div class="b " style="left:3px;top:172.2px;width:173px;height:12.8px;background:#dcebe7;"></div>
<svg class="b" style="left:6.3999999999999995px;top:109.9px" width="5.6" height="5.6" viewBox="0 0 5.6 5.6"><rect x=".4" y=".4" width="4.800" height="4.800" fill="#fdfdfd" stroke="#cfcfcf" stroke-width=".5"/><path d="M1.500,2.800h2.600" stroke="#6674c4" stroke-width=".7"/></svg>
<svg class="b" style="left:15.200000000000001px;top:108.7px" width="8" height="8" viewBox="0 0 8 8"><defs><linearGradient id="lg1541127" x1="0" x2="1" y1="0" y2="0"><stop offset="0" stop-color="#1f8a84"/><stop offset=".55" stop-color="#bfe6e0"/><stop offset="1" stop-color="#fff"/></linearGradient></defs>
<rect x="0" y=".1" width="8" height="7.800" fill="url(#lg1541127)"/>
<rect x="0" y=".1" width="8" height="2" fill="#151515"/><rect x="0" y="3" width="8" height="2" fill="#151515"/><rect x="0" y="5.900" width="8" height="2" fill="#151515"/>
<rect x="0" y=".1" width="1.300" height="7.800" fill="#123c3a" opacity=".7"/></svg>
<div class="t l " style="left:26px;top:112.7px;font-size:6.6px;color:#262626;">项目信息</div>
<svg class="b" style="left:16.599999999999998px;top:123.05px" width="5.6" height="5.6" viewBox="0 0 5.6 5.6"><rect x=".4" y=".4" width="4.800" height="4.800" fill="#fdfdfd" stroke="#cfcfcf" stroke-width=".5"/><path d="M1.500,2.800h2.600" stroke="#6674c4" stroke-width=".7"/></svg>
<svg class="b" style="left:24.8px;top:121.25px" width="9.4" height="9.2" viewBox="0 0 9.4 9.2"><path d="M4.700,.6l3.800,2v4l-3.800,2l-3.800,-2v-4z" fill="#fff" stroke="#2e2e2e" stroke-width=".8"/>
<path d="M4.700,4.600v3.600M4.700,4.600l-3.400,-1.800M4.700,4.600l3.400,-1.800" fill="none" stroke="#2f9e8a" stroke-width=".8" stroke-dasharray=".9 .8"/></svg>
<div class="t l " style="left:36.4px;top:125.85px;font-size:6.6px;color:#262626;">模型视图</div>
<svg class="b" style="left:36.4px;top:135.0px" width="8.4" height="8" viewBox="0 0 8.4 8"><path d="M0.8,0.6h3.2v6.6h-3.2zM4,2.2h3.4v5M.2,7.4h8" stroke="#4a4a4a" stroke-width=".55" fill="none"/><path d="M5.6,4v2.4" stroke="#4a4a4a" stroke-width=".5"/></svg>
<div class="t l " style="left:47.6px;top:139.0px;font-size:6.6px;color:#262626;">全楼模型</div>
<svg class="b" style="left:36.4px;top:148.15px" width="8.4" height="8" viewBox="0 0 8.4 8"><path d="M4.2,1l3.4,1.6v3l-3.4,1.6l-3.4,-1.6v-3z" fill="#f4f4f4" stroke="#c0c0c0" stroke-width=".5"/><path d="M.8,2.6l3.4,1.5l3.4,-1.5M4.2,4.1v3" stroke="#c8c8c8" stroke-width=".5" fill="none"/></svg>
<div class="t l " style="left:47.6px;top:152.15px;font-size:6.6px;color:#262626;">自然层</div>
<svg class="b" style="left:27.2px;top:162.5px" width="5.6" height="5.6" viewBox="0 0 5.6 5.6"><rect x=".4" y=".4" width="4.800" height="4.800" fill="#fdfdfd" stroke="#cfcfcf" stroke-width=".5"/><path d="M1.500,2.800h2.600" stroke="#6674c4" stroke-width=".7"/></svg>
<svg class="b" style="left:36.4px;top:161.3px" width="8.4" height="8" viewBox="0 0 8.4 8"><path d="M4.2,.8l3.8,1.5l-3.8,1.5l-3.8,-1.5z" fill="#b8b8b8" stroke="#8a8a8a" stroke-width=".4"/><path d="M.4,4l3.8,1.5l3.8,-1.5M.4,5.6l3.8,1.5l3.8,-1.5" stroke="#8a8a8a" stroke-width=".6" fill="none"/></svg>
<div class="t l " style="left:47.6px;top:165.3px;font-size:6.6px;color:#262626;">标准层</div>
<svg class="b" style="left:46.8px;top:174.45px" width="8" height="8" viewBox="0 0 8 8"><defs><linearGradient id="lg4701784" x1="0" x2="1" y1="0" y2="0"><stop offset="0" stop-color="#1f8a84"/><stop offset=".55" stop-color="#bfe6e0"/><stop offset="1" stop-color="#fff"/></linearGradient></defs>
<rect x="0" y=".1" width="8" height="7.800" fill="url(#lg4701784)"/>
<rect x="0" y=".1" width="8" height="2" fill="#151515"/><rect x="0" y="3" width="8" height="2" fill="#151515"/><rect x="0" y="5.900" width="8" height="2" fill="#151515"/>
<rect x="0" y=".1" width="1.300" height="7.800" fill="#123c3a" opacity=".7"/></svg>
<div class="t l " style="left:57.8px;top:178.45px;font-size:6.6px;color:#262626;">标准层1</div>
<svg class="b" style="left:46.8px;top:187.6px" width="8" height="8" viewBox="0 0 8 8"><defs><linearGradient id="lg4701916" x1="0" x2="1" y1="0" y2="0"><stop offset="0" stop-color="#1f8a84"/><stop offset=".55" stop-color="#bfe6e0"/><stop offset="1" stop-color="#fff"/></linearGradient></defs>
<rect x="0" y=".1" width="8" height="7.800" fill="url(#lg4701916)"/>
<rect x="0" y=".1" width="8" height="2" fill="#151515"/><rect x="0" y="3" width="8" height="2" fill="#151515"/><rect x="0" y="5.900" width="8" height="2" fill="#151515"/>
<rect x="0" y=".1" width="1.300" height="7.800" fill="#123c3a" opacity=".7"/></svg>
<div class="t l " style="left:57.8px;top:191.6px;font-size:6.6px;color:#262626;">安装面层2</div>
<svg class="b" style="left:36.199999999999996px;top:200.75px" width="8" height="8" viewBox="0 0 8 8"><defs><linearGradient id="lg3642047" x1="0" x2="1" y1="0" y2="0"><stop offset="0" stop-color="#1f8a84"/><stop offset=".55" stop-color="#bfe6e0"/><stop offset="1" stop-color="#fff"/></linearGradient></defs>
<rect x="0" y=".1" width="8" height="7.800" fill="url(#lg3642047)"/>
<rect x="0" y=".1" width="8" height="2" fill="#151515"/><rect x="0" y="3" width="8" height="2" fill="#151515"/><rect x="0" y="5.900" width="8" height="2" fill="#151515"/>
<rect x="0" y=".1" width="1.300" height="7.800" fill="#123c3a" opacity=".7"/></svg>
<div class="t l " style="left:47.6px;top:204.75px;font-size:6.6px;color:#262626;">视图</div>
<div class="b " style="left:0px;top:542px;width:176.6px;height:15.3px;background:#e9e9e9;"></div>
<div class="b " style="left:0px;top:543.7px;width:39.7px;height:12.6px;background:#fdfdfd;"></div>
<div class="t l " style="left:3.3px;top:550.5px;font-size:6.5px;color:#222;">视图浏览器</div>
<div class="t l " style="left:43.6px;top:550.5px;font-size:6.5px;color:#555;">属性</div>
</div>
<div id="canvas">
<div class="b " style="left:178.6px;top:84.9px;width:877.6px;height:455px;background:#ffffff;"></div>
<div class="b " style="left:1056.4px;top:13.7px;width:1.6px;height:526.3px;background:#f3f3f3;"></div>
<div class="b " style="left:1056.4px;top:102.6px;width:1.6px;height:15px;background:#d8d8d8;"></div>
<svg class="b" style="left:0;top:0" width="1058" height="573" viewBox="0 0 1058 573"><path d="M475.7,120V222.400M475.7,442.500V506.500" stroke="#ee6c6c" stroke-width=".8" stroke-dasharray="5 1.6 0.9 1.6" fill="none"/><path d="M584.4,120V222.400M584.4,442.500V506.500" stroke="#ee6c6c" stroke-width=".8" stroke-dasharray="5 1.6 0.9 1.6" fill="none"/><path d="M670.3,120V222.400M670.3,442.500V506.500" stroke="#ee6c6c" stroke-width=".8" stroke-dasharray="5 1.6 0.9 1.6" fill="none"/><path d="M395,226.2H472.200M676,226.2H839.700" stroke="#f28585" stroke-width=".6" stroke-dasharray="5 1.6 0.9 1.6" fill="none"/><path d="M395,280.4H472.200M676,280.4H839.700" stroke="#f28585" stroke-width=".6" stroke-dasharray="5 1.6 0.9 1.6" fill="none"/><path d="M395,438.8H472.200M676,438.8H839.700" stroke="#f28585" stroke-width=".6" stroke-dasharray="5 1.6 0.9 1.6" fill="none"/><circle cx="475.7" cy="106.4" r="13.3" fill="#fff" stroke="#84d884" stroke-width=".85"/><text x="475.7" y="111.7" font-size="14.5" text-anchor="middle" fill="#727272" font-family="DejaVu Sans, Liberation Sans, sans-serif" font-weight="200">1</text><circle cx="475.7" cy="520" r="13.3" fill="#fff" stroke="#84d884" stroke-width=".85"/><text x="475.7" y="525.3" font-size="14.5" text-anchor="middle" fill="#727272" font-family="DejaVu Sans, Liberation Sans, sans-serif" font-weight="200">1</text><circle cx="584.4" cy="106.4" r="13.3" fill="#fff" stroke="#84d884" stroke-width=".85"/><text x="584.4" y="111.7" font-size="14.5" text-anchor="middle" fill="#727272" font-family="DejaVu Sans, Liberation Sans, sans-serif" font-weight="200">2</text><circle cx="584.4" cy="520" r="13.3" fill="#fff" stroke="#84d884" stroke-width=".85"/><text x="584.4" y="525.3" font-size="14.5" text-anchor="middle" fill="#727272" font-family="DejaVu Sans, Liberation Sans, sans-serif" font-weight="200">2</text><circle cx="670.3" cy="106.4" r="13.3" fill="#fff" stroke="#84d884" stroke-width=".85"/><text x="670.3" y="111.7" font-size="14.5" text-anchor="middle" fill="#727272" font-family="DejaVu Sans, Liberation Sans, sans-serif" font-weight="200">3</text><circle cx="670.3" cy="520" r="13.3" fill="#fff" stroke="#84d884" stroke-width=".85"/><text x="670.3" y="525.3" font-size="14.5" text-anchor="middle" fill="#727272" font-family="DejaVu Sans, Liberation Sans, sans-serif" font-weight="200">3</text><circle cx="381.5" cy="225.9" r="13.3" fill="#fff" stroke="#84d884" stroke-width=".85"/><text x="381.5" y="231.20000000000002" font-size="14.5" text-anchor="middle" fill="#727272" font-family="DejaVu Sans, Liberation Sans, sans-serif" font-weight="200">C</text><circle cx="853.2" cy="225.9" r="13.3" fill="#fff" stroke="#84d884" stroke-width=".85"/><text x="853.2" y="231.20000000000002" font-size="14.5" text-anchor="middle" fill="#727272" font-family="DejaVu Sans, Liberation Sans, sans-serif" font-weight="200">C</text><circle cx="381.5" cy="280.4" r="13.3" fill="#fff" stroke="#84d884" stroke-width=".85"/><text x="381.5" y="285.7" font-size="14.5" text-anchor="middle" fill="#727272" font-family="DejaVu Sans, Liberation Sans, sans-serif" font-weight="200">B</text><circle cx="853.2" cy="280.4" r="13.3" fill="#fff" stroke="#84d884" stroke-width=".85"/><text x="853.2" y="285.7" font-size="14.5" text-anchor="middle" fill="#727272" font-family="DejaVu Sans, Liberation Sans, sans-serif" font-weight="200">B</text><circle cx="381.5" cy="438.7" r="13.3" fill="#fff" stroke="#84d884" stroke-width=".85"/><text x="381.5" y="444.0" font-size="14.5" text-anchor="middle" fill="#727272" font-family="DejaVu Sans, Liberation Sans, sans-serif" font-weight="200">A</text><circle cx="853.2" cy="438.7" r="13.3" fill="#fff" stroke="#84d884" stroke-width=".85"/><text x="853.2" y="444.0" font-size="14.5" text-anchor="middle" fill="#727272" font-family="DejaVu Sans, Liberation Sans, sans-serif" font-weight="200">A</text><rect x="472.4" y="222.6" width="201.3" height="219.7" fill="#96fb2c"/><rect x="478.8" y="229.4" width="102.5" height="206.0" fill="#d6fef7"/><rect x="587.7" y="229.4" width="79.7" height="47.1" fill="#82dae2"/><rect x="587.7" y="283.2" width="79.7" height="152.2" fill="#ffeeec"/><rect x="500.2" y="212.7" width="68.2" height="9.9" fill="#ffd02a"/><path d="M500.2,212.700H568.400V222.6" stroke="#b8b8b8" stroke-width="0.5" fill="none"/><path d="M500.2,222.6H568.400" stroke="#c89a20" stroke-width="0.6" fill="none"/><path d="M500.2,212.700V229.4" stroke="#0a0a0a" stroke-width="0.8" fill="none"/><rect x="505.4" y="442.3" width="49.4" height="26.1" fill="#ffd02a" stroke="#0a0a0a" stroke-width="0.7"/><rect x="500.2" y="222.6" width="68.2" height="6.8" fill="#a1c0ff"/><rect x="602.6" y="222.6" width="49.8" height="6.8" fill="#a1c0ff"/><path d="M602.600,226.300H652.400" stroke="#5a5a5a" stroke-width="0.6" fill="none"/><rect x="472.4" y="236.2" width="6.4" height="40.4" fill="#a1c0ff"/><rect x="472.4" y="305.2" width="6.4" height="55.9" fill="#a1c0ff"/><rect x="472.4" y="361.1" width="6.4" height="81.2" fill="#b98f86"/><rect x="581.3" y="229.4" width="6.4" height="115.4" fill="#a1c0ff"/><rect x="667.4" y="229.4" width="6.3" height="35.9" fill="#a1c0ff"/><rect x="667.4" y="301.2" width="6.3" height="68.1" fill="#a1c0ff"/><rect x="587.7" y="276.5" width="51.3" height="6.7" fill="#a1c0ff"/><rect x="639" y="276.5" width="28.4" height="6.7" fill="#96fb2c"/><rect x="505.4" y="435.4" width="49.4" height="6.9" fill="#a1c0ff"/><rect x="613.8" y="435.4" width="26.8" height="6.9" fill="#a1c0ff"/><path d="M472.4,222.6H673.7" stroke="#8a9a7a" stroke-width="0.5" fill="none"/><path d="M673.7,222.6V442.3" stroke="#555" stroke-width="0.6" fill="none"/><path d="M472.4,222.6V442.3H673.7" stroke="#444" stroke-width="0.7" fill="none"/><path d="M478.8,229.4H581.3" stroke="#0a0a0a" stroke-width="0.9" fill="none"/><path d="M581.3,229.4V435.4" stroke="#0a0a0a" stroke-width="0.6" fill="none"/><path d="M587.7,229.4V344.800" stroke="#444" stroke-width="0.5" fill="none"/><path d="M478.8,236.200V361.100" stroke="#445" stroke-width="0.5" fill="none"/><path d="M587.7,229.4H673.7" stroke="#0a0a0a" stroke-width="0.8" fill="none"/><path d="M667.4,229.4V265.300M667.4,301.200V369.300" stroke="#445" stroke-width="0.5" fill="none"/><path d="M587.7,276.500H667.4" stroke="#556" stroke-width="0.4" fill="none"/><path d="M587.7,283.200H667.4" stroke="#0a0a0a" stroke-width="0.8" fill="none"/><path d="M478.8,435.4H673.7" stroke="#0a0a0a" stroke-width="0.9" fill="none"/><path d="M584.500,344.800V438.900H554.800" stroke="#0a0a0a" stroke-width="0.9" fill="none"/><path d="M505.400,438.900H475.100V361.100" stroke="#0a0a0a" stroke-width="0.7" fill="none"/><path d="M475.600,236.200V226.200H500.200" stroke="#0a0a0a" stroke-width="0.7" fill="none"/><path d="M478.8,236.200V229.4" stroke="#222" stroke-width="0.5" fill="none"/><path d="M568.400,226.200H584.800V229.4" stroke="#0a0a0a" stroke-width="0.9" fill="none"/><path d="M475.600,276.600V305.200" stroke="#0a0a0a" stroke-width="0.6" fill="none"/><path d="M472.4,236.200H478.8M472.4,276.600H478.8M472.4,305.200H478.8M472.4,361.100H478.8" stroke="#556" stroke-width="0.4" fill="none"/><path d="M568.400,222.6V229.4M602.600,222.6V229.4M652.400,222.6V229.4" stroke="#555" stroke-width="0.4" fill="none"/><path d="M505.400,435.4V442.3M554.800,435.4V442.3M602.500,435.4V442.3M613.800,435.4V442.3M640.600,435.4V442.3M667.100,435.4V442.3" stroke="#222" stroke-width="0.5" fill="none"/><path d="M667.4,265.300H673.7M667.4,301.200H673.7M667.4,369.300H673.7M639,276.500V283.200" stroke="#556" stroke-width="0.4" fill="none"/><path d="M587.7,306.3H667.4" stroke="#b4abab" stroke-width="0.6" fill="none"/><path d="M587.7,321H667.4" stroke="#b4abab" stroke-width="0.6" fill="none"/><path d="M587.7,337.6H667.4" stroke="#d4caca" stroke-width="0.6" fill="none"/><path d="M587.7,363.4H667.4" stroke="#b4abab" stroke-width="0.6" fill="none"/><path d="M587.7,380.7H667.4" stroke="#b4abab" stroke-width="0.6" fill="none"/><path d="M587.7,398.3H667.4" stroke="#b4abab" stroke-width="0.6" fill="none"/><path d="M587.7,406.8H667.4" stroke="#b4abab" stroke-width="0.6" fill="none"/><path d="M587.7,312.5H667.4" stroke="#0a0a0a" stroke-width="0.9" fill="none"/><path d="M587.7,329.1H667.4" stroke="#0a0a0a" stroke-width="0.9" fill="none"/><path d="M587.7,354.9H667.4" stroke="#0a0a0a" stroke-width="0.9" fill="none"/><path d="M587.7,372.2H667.4" stroke="#0a0a0a" stroke-width="0.9" fill="none"/><path d="M587.7,389.5H667.4" stroke="#0a0a0a" stroke-width="0.9" fill="none"/><path d="M587.7,413.6H667.4" stroke="#0a0a0a" stroke-width="0.9" fill="none"/><path d="M587.7,345.200H625.400M587.7,346.500H625.400" stroke="#555" stroke-width="0.5" fill="none"/><rect x="625.6" y="312.5" width="3.7" height="94.3" fill="#fff" stroke="#777" stroke-width="0.5"/><path d="M505.5,255.8h5.8M505.5,261.8h5.8" stroke="#8a9a98" stroke-width=".5"/><path d="M505.5,255.8v6M511.3,255.8v6" stroke="#0a0a0a" stroke-width=".9"/><path d="M548.5,255.8h5.8M548.5,261.8h5.8" stroke="#8a9a98" stroke-width=".5"/><path d="M548.5,255.8v6M554.3,255.8v6" stroke="#0a0a0a" stroke-width=".9"/><rect x="614.500" y="244.600" width="5.900" height="5.800" fill="none" stroke="#0a0a0a" stroke-width="1"/><rect x="548.500" y="402.400" width="5.900" height="6.800" fill="none" stroke="#0a0a0a" stroke-width=".7"/><rect x="506.2" y="375.2" width="11.7" height="32.5" fill="#d6fef7" stroke="#0a0a0a" stroke-width="0.9"/><rect x="508.400" y="377.200" width="7.300" height="28.600" rx="1.200" fill="#8197b7" stroke="#3a4660" stroke-width=".7"/><rect x="504" y="390" width="2.2" height="3.7" fill="#f4f4f4" stroke="#0a0a0a" stroke-width="0.5"/><rect x="517.9" y="390" width="2.2" height="3.7" fill="#f4f4f4" stroke="#0a0a0a" stroke-width="0.5"/><path d="M209.3,484V508.6" stroke="#2ec4a8" stroke-width=".9"/><path d="M209.3,509H234.7" stroke="#f06060" stroke-width="1.4"/><text x="209.6" y="479.3" font-size="8.2" text-anchor="middle" fill="#333" font-family="DejaVu Sans, Liberation Sans, sans-serif" font-weight="200">Y</text><text x="209.2" y="511.9" font-size="8.2" text-anchor="middle" fill="#333" font-family="DejaVu Sans, Liberation Sans, sans-serif" font-weight="200">Z</text><text x="242" y="511.9" font-size="8.2" text-anchor="middle" fill="#333" font-family="DejaVu Sans, Liberation Sans, sans-serif" font-weight="200">X</text><rect x="994.8" y="120" width="28" height="29" fill="#e6e6e6"/><path d="M994.8,123.400V120h3.400zM1022.8,123.400V120h-3.400zM994.8,145.600v3.400h3.400zM1022.8,145.600v3.400h-3.400z" fill="#efefef"/><text x="1008.9" y="139.2" font-size="12.5" font-weight="300" text-anchor="middle" fill="#a0a0a0" font-family="Liberation Sans, Noto Sans CJK SC, sans-serif">上</text></svg>
</div>
<div id="cmdbar">
<div class="b " style="left:176.6px;top:539.9px;width:881.4px;height:17.2px;background:#ebebeb;"></div>
<div class="b " style="left:177.2px;top:541.2px;width:714.6px;height:15.9px;background:#fdfdfd;border-radius:1.4px"></div>
<div class="b " style="left:893.1px;top:540.7px;width:94.2px;height:15.9px;background:#fdfdfd;border-radius:1.4px"></div>
<svg class="b" style="left:179.3px;top:544.4px" width="1.2" height="8" viewBox="0 0 1.2 8"><path d="M.6,0v8" stroke="#b4b4b4" stroke-width=".9" stroke-dasharray=".9 1.1"/></svg>
<svg class="b" style="left:185.3px;top:544.6px" width="3" height="6.6" viewBox="0 0 3 6.6"><path d="M.4,.3h.8l.3,.3l.3,-.3h.8M.4,6.300h.8l.3,-.3l.3,.3h.8M1.500,.6v5.400" stroke="#7a5a3a" stroke-width=".5" fill="none"/></svg>
<div class="b " style="left:515.2px;top:544.2px;width:0.6px;height:9.4px;background:#e0e0e0;"></div>
<svg class="b" style="left:521px;top:546.2px" width="6.4" height="5" viewBox="0 0 6.4 5"><path d="M.9,3.900l2.300,-2.500l2.300,2.500" stroke="#444" stroke-width=".7" fill="none"/></svg>
<svg class="b" style="left:534.8px;top:544.4px" width="1.2" height="8" viewBox="0 0 1.2 8"><path d="M.6,0v8" stroke="#b4b4b4" stroke-width=".9" stroke-dasharray=".9 1.1"/></svg>
<svg class="b" style="left:542.4px;top:544.2px" width="8.4" height="9.4" viewBox="0 0 8.4 9.4"><path d="M1.200,.8h5v7.800" fill="none" stroke="#c8c8c8" stroke-width=".5"/><path d="M1.200,.8v7" stroke="#c8c8c8" stroke-width=".5"/><path d="M3,8.300h3.800" stroke="#e03030" stroke-width=".9" stroke-dasharray="1.100 .5"/></svg>
<svg class="b" style="left:555.4px;top:544.2px" width="8.4" height="9.4" viewBox="0 0 8.4 9.4"><path d="M1.600,.8h4.200l1.400,1.400v6.200h-5.600z" fill="#efefef" stroke="#c8c8c8" stroke-width=".5"/><path d="M3.300,7.600v-5l1.600,5v-4" stroke="#a8a8a8" stroke-width=".6" fill="none"/></svg>
<div class="b " style="left:568.1px;top:544.2px;width:0.6px;height:9.4px;background:#e0e0e0;"></div>
<svg class="b" style="left:573.9px;top:544.0999999999999px" width="9.4" height="9.4" viewBox="0 0 9.4 9.4"><g fill="#6cc4b4"><path d="M.8,2.800l2,-2h5.800l-2,2z"/></g><path d="M.8,2.800h5.800v5.800h-5.800zM2.800,.8h5.800v5.800h-5.800zM.8,2.800l2,-2M6.600,2.800l2,-2M.8,8.600l2,-2M6.600,8.600l2,-2" fill="none" stroke="#1a1a1a" stroke-width=".7"/></svg>
<svg class="b" style="left:587.8px;top:544.0999999999999px" width="9.4" height="9.4" viewBox="0 0 9.4 9.4"><g fill="#6cc4b4"><path d="M.8,8.600l2,-2h5.800l-2,2z"/></g><path d="M.8,2.800h5.800v5.800h-5.800zM2.800,.8h5.800v5.800h-5.800zM.8,2.800l2,-2M6.600,2.800l2,-2M.8,8.600l2,-2M6.600,8.600l2,-2" fill="none" stroke="#1a1a1a" stroke-width=".7"/></svg>
<svg class="b" style="left:601.8px;top:544.0999999999999px" width="9.4" height="9.4" viewBox="0 0 9.4 9.4"><g fill="#6cc4b4"><path d="M.8,2.800l2,-2v5.800l-2,2z"/></g><path d="M.8,2.800h5.800v5.800h-5.800zM2.800,.8h5.800v5.800h-5.800zM.8,2.800l2,-2M6.600,2.800l2,-2M.8,8.600l2,-2M6.600,8.600l2,-2" fill="none" stroke="#1a1a1a" stroke-width=".7"/></svg>
<svg class="b" style="left:616.6999999999999px;top:544.0999999999999px" width="9.4" height="9.4" viewBox="0 0 9.4 9.4"><g fill="#6cc4b4"><rect x=".8" y="2.800" width="5.800" height="5.800"/></g><path d="M.8,2.800h5.800v5.800h-5.800zM2.800,.8h5.800v5.800h-5.800zM.8,2.800l2,-2M6.600,2.800l2,-2M.8,8.600l2,-2M6.600,8.600l2,-2" fill="none" stroke="#1a1a1a" stroke-width=".7"/></svg>
<svg class="b" style="left:630.5px;top:544.0999999999999px" width="9.4" height="9.4" viewBox="0 0 9.4 9.4"><g fill="#6cc4b4"><path d="M6.600,2.800l2,-2v5.800l-2,2z"/></g><path d="M.8,2.800h5.800v5.800h-5.800zM2.800,.8h5.800v5.800h-5.800zM.8,2.800l2,-2M6.600,2.800l2,-2M.8,8.600l2,-2M6.600,8.600l2,-2" fill="none" stroke="#1a1a1a" stroke-width=".7"/></svg>
<svg class="b" style="left:644.9px;top:544.0999999999999px" width="9.4" height="9.4" viewBox="0 0 9.4 9.4"><g fill="#6cc4b4"><rect x="2.800" y=".8" width="5.800" height="5.800"/></g><path d="M.8,2.800h5.800v5.800h-5.800zM2.800,.8h5.800v5.800h-5.800zM.8,2.800l2,-2M6.600,2.800l2,-2M.8,8.600l2,-2M6.600,8.600l2,-2" fill="none" stroke="#1a1a1a" stroke-width=".7"/></svg>
<div class="b " style="left:659.2px;top:544.2px;width:0.6px;height:9.4px;background:#e0e0e0;"></div>
<svg class="b" style="left:663.6px;top:544px" width="9.6" height="9.6" viewBox="0 0 9.6 9.6"><path d="M1,3.600l3,-1.600l4.600,1v4.200l-3,1.800l-4.600,-1.200z" fill="#fff" stroke="#333" stroke-width=".6"/><path d="M1,3.600l4.600,1.200l3,-1.800M5.600,4.800v4.200" fill="none" stroke="#333" stroke-width=".5"/><path d="M4,1.200l3,.6v3l-3,-.6z" fill="#bdbdbd" stroke="#333" stroke-width=".5"/></svg>
<svg class="b" style="left:678.8px;top:544.4px" width="1.2" height="8" viewBox="0 0 1.2 8"><path d="M.6,0v8" stroke="#b4b4b4" stroke-width=".9" stroke-dasharray=".9 1.1"/></svg>
<div class="t l " style="left:715.6px;top:548.4px;font-size:6.4px;color:#444;">当前大样图版本：<span style="letter-spacing:.5px;margin-left:1.4px">pkpm_zjhn</span></div>
<div class="t l " style="left:816.6px;top:548.4px;font-size:6.4px;color:#444;">配模部位：无</div>
<svg class="b" style="left:894.8px;top:544.4px" width="1.2" height="8" viewBox="0 0 1.2 8"><path d="M.6,0v8" stroke="#b4b4b4" stroke-width=".9" stroke-dasharray=".9 1.1"/></svg>
<div class="b " style="left:899.2px;top:542px;width:38.8px;height:13.5px;background:#ffffff;border:0.6px solid #c0c0c0;box-sizing:border-box"></div>
<div class="t l " style="left:901.5px;top:548.8px;font-size:6.5px;color:#222;">中精度</div>
<svg class="b" style="left:931.6px;top:547.6px" width="4" height="3" viewBox="0 0 4 3"><path d="M.5,.5l1.400,1.500l1.400,-1.500z" fill="#555"/></svg>
<div class="t c " style="left:946.6px;top:548.9px;font-size:8.2px;color:#222;">A</div>
<svg class="b" style="left:955.4px;top:544.4px" width="10.4" height="9" viewBox="0 0 10.4 9"><path d="M.8,7.900h9M1.800,7.900v-3.600h3v3.600M4.800,7.900v-6.400h3.200v6.400" stroke="#333" stroke-width=".7" fill="none"/></svg>
<div class="b " style="left:970.7px;top:544.2px;width:0.6px;height:9.4px;background:#e0e0e0;"></div>
<div class="t c " style="left:979.4px;top:548.8px;font-size:6.8px;color:#222;">热</div>
</div>
<div id="statusbar">
<div class="b " style="left:0px;top:557.2px;width:1058px;height:15.8px;background:#f0f0f0;"></div>
<svg class="b" style="left:2.7px;top:559.8px" width="11.4" height="11.4" viewBox="0 0 9.6 9.6"><path d="M1.200,2.200h7.200v6.200h-7.200z" stroke="#333" stroke-width=".65" fill="none"/><path d="M1.200,1.800h7.200" stroke="#333" stroke-width="1"/></svg>
<svg class="b" style="left:16.900000000000002px;top:559.8px" width="11.4" height="11.4" viewBox="0 0 9.6 9.6"><path d="M1,1.400l2,1.200v4.600l-2,1.200M8.600,1.400l-2,1.200v4.600l2,1.200M3,2.600h3.600M3,7.200h3.600" stroke="#333" stroke-width=".65" fill="none"/></svg>
<svg class="b" style="left:31.099999999999998px;top:559.8px" width="11.4" height="11.4" viewBox="0 0 9.6 9.6"><path d="M1,1.600h7v5h-7zM1,3.400h7M4.400,3.400v3.200" stroke="#333" stroke-width=".65" fill="none"/><path d="M6,8h3M7.500,6.600v2.800" stroke="#666" stroke-width=".7"/></svg>
<div class="b " style="left:46.6px;top:561.4px;width:0.5px;height:8.2px;background:#c8c8c8;"></div>
<svg class="b" style="left:49.3px;top:559.8px" width="11.4" height="11.4" viewBox="0 0 9.6 9.6"><path d="M1,3v-2h2M6.600,1h2v2M8.600,6.600v2h-2M3,8.600h-2v-2" stroke="#333" stroke-width=".65" fill="none"/><path d="M2.600,2.600l4.400,4.400M7,2.600l-4.400,4.400M4.800,1.800v6M1.800,4.800h6" stroke="#333" stroke-width=".6"/></svg>
<svg class="b" style="left:64.3px;top:559.8px" width="11.4" height="11.4" viewBox="0 0 9.6 9.6"><path d="M2.600,5.400v-2.400q0,-.8 .8,-.8v2.400v-3q0,-.8 .8,-.8t.8,.8v2.600v-2.400q0,-.7 .8,-.7t.8,.7v3v-1.800q0,-.7 .7,-.7t.7,.7v3q0,2.600 -2.400,2.600h-1.400q-1.400,0 -2.200,-1.400l-1.200,-2q.6,-.8 1.600,.2z" stroke="#333" stroke-width=".65" fill="none"/></svg>
<svg class="b" style="left:78.7px;top:559.8px" width="11.4" height="11.4" viewBox="0 0 9.6 9.6"><ellipse cx="4.800" cy="4.800" rx="3.800" ry="1.800" stroke="#333" stroke-width=".65" fill="none"/><ellipse cx="4.800" cy="4.800" rx="1.800" ry="3.800" stroke="#333" stroke-width=".65" fill="none"/><circle cx="4.800" cy="4.800" r=".7" fill="#333"/></svg>
<svg class="b" style="left:92.7px;top:559.8px" width="11.4" height="11.4" viewBox="0 0 9.6 9.6"><circle cx="4" cy="4" r="2.800" stroke="#333" stroke-width=".65" fill="none"/><path d="M6,6l2.800,2.800" stroke="#333" stroke-width="1"/></svg>
<div class="b " style="left:107.2px;top:561.4px;width:0.5px;height:8.2px;background:#c8c8c8;"></div>
<svg class="b" style="left:110.3px;top:559.8px" width="11.4" height="11.4" viewBox="0 0 9.6 9.6"><path d="M1,3h5.600v5.600h-5.600zM1,3l2,-2h5.600v5.600l-2,2M6.600,3l2,-2" stroke="#333" stroke-width=".65" fill="none"/></svg>
<svg class="b" style="left:124.89999999999999px;top:559.8px" width="11.4" height="11.4" viewBox="0 0 9.6 9.6"><path d="M1,3h5.600v5.600h-5.600zM1,3l2,-2h5.600v5.600l-2,2M6.600,3l2,-2" stroke="#333" stroke-width=".65" fill="none"/><path d="M3,1v5.600h5.600M3,6.600l-2,2" stroke="#333" stroke-width=".4" fill="none"/></svg>
<div class="b " style="left:139.8px;top:560.1px;width:11.2px;height:10.7px;background:#d4ece6;border:0.8px solid #2f9e8a;box-sizing:border-box"></div>
<svg class="b" style="left:139.70000000000002px;top:559.8px" width="11.4" height="11.4" viewBox="0 0 9.6 9.6"><path d="M1,3l2,-2h5.600v5.600l-2,2z" fill="#444"/><rect x="1" y="3" width="5.600" height="5.600" fill="#b4b4b4"/><path d="M1,3l2,-2h5.600l-2,2z" fill="#d8d8d8"/><path d="M1,3h5.600v5.600h-5.600zM1,3l2,-2h5.600v5.600l-2,2M6.600,3l2,-2" stroke="#333" stroke-width=".65" fill="none"/></svg>
<svg class="b" style="left:153.70000000000002px;top:559.8px" width="11.4" height="11.4" viewBox="0 0 9.6 9.6"><path d="M1,3l2,-2h5.600v5.600l-2,2h-5.600z" fill="#bdbdbd"/><path d="M6.600,3l2,-2v5.600l-2,2z" fill="#555"/><path d="M1,3h5.600v5.600h-5.600zM1,3l2,-2h5.600v5.600l-2,2M6.600,3l2,-2" stroke="#333" stroke-width=".65" fill="none"/></svg>
<svg class="b" style="left:167.70000000000002px;top:559.8px" width="11.4" height="11.4" viewBox="0 0 9.6 9.6"><path d="M1,3l2,-2h5.600v5.600l-2,2h-5.600z" fill="#bdbdbd"/><path d="M6.600,3l2,-2v5.600l-2,2z" fill="#555"/></svg>
<svg class="b" style="left:182.70000000000002px;top:559.8px" width="11.4" height="11.4" viewBox="0 0 9.6 9.6"><path d="M2.600,4.600l2.200,-2.200l2.200,2.200M2.600,7.200l2.200,-2.200l2.200,2.200" stroke="#333" stroke-width=".65" fill="none"/></svg>
<div class="b " style="left:197.3px;top:561.4px;width:0.5px;height:8.2px;background:#c8c8c8;"></div>
<div class="b " style="left:203.8px;top:565px;width:5px;height:0.7px;background:#666;"></div>
<div class="b " style="left:213.4px;top:565.1px;width:33.6px;height:0.5px;background:#dcdcdc;"></div>
<div class="b " style="left:229.4px;top:561.4px;width:2.4px;height:7.2px;background:#fafafa;border:0.5px solid #aaa;box-sizing:border-box"></div>
<div class="b " style="left:252px;top:565px;width:5px;height:0.7px;background:#666;"></div>
<div class="b " style="left:254.15px;top:562.85px;width:0.7px;height:5px;background:#666;"></div>
<div class="t c " style="left:544.7px;top:564.6px;font-size:6.9px;color:#444;">288.40 , 19287.50 , 0.00</div>
<div class="b " style="left:949.8px;top:560.2px;width:11px;height:10.6px;background:#b9e0d7;border-left:0.7px solid #4aa898;border-bottom:0.8px solid #4aa898;box-sizing:border-box"></div>
<svg class="b" style="left:949.6px;top:559.8px" width="11.4" height="11.4" viewBox="0 0 9.6 9.6"><path d="M1.600,2.600h6.200v5.600h-6.200zM3,1.200v1.400M7.800,4h1" stroke="#333" stroke-width=".65" fill="none"/></svg>
<svg class="b" style="left:961.6px;top:564.2px" width="4" height="3" viewBox="0 0 4 3"><path d="M.3,.4h3.400l-1.700,2z" fill="#222"/></svg>
<div class="b " style="left:969.2px;top:560.2px;width:11.8px;height:10.6px;background:#b9e0d7;border-left:0.7px solid #4aa898;border-bottom:0.8px solid #4aa898;box-sizing:border-box"></div>
<svg class="b" style="left:969.4px;top:559.8px" width="11.4" height="11.4" viewBox="0 0 9.6 9.6"><path d="M1.200,8.300h7.400M1.600,8l6.400,-6.400" stroke="#333" stroke-width=".65" fill="none"/><path d="M5.400,4.400l.8,.8" stroke="#333" stroke-width=".6"/></svg>
<div class="b " style="left:984.0px;top:560.2px;width:11.2px;height:10.6px;background:#b9e0d7;border-left:0.7px solid #4aa898;border-bottom:0.8px solid #4aa898;box-sizing:border-box"></div>
<svg class="b" style="left:983.9px;top:559.8px" width="11.4" height="11.4" viewBox="0 0 9.6 9.6"><path d="M1.400,1.200l1.400,7h6M3.400,8l3.600,-3.400v3.400" stroke="#333" stroke-width=".65" fill="none"/></svg>
<svg class="b" style="left:997.5999999999999px;top:559.8px" width="11.4" height="11.4" viewBox="0 0 9.6 9.6"><path d="M1.600,1.200v7.200h7M1.600,5.600h3v2.800" stroke="#333" stroke-width=".8" fill="none"/></svg>
<svg class="b" style="left:1011.9px;top:559.8px" width="11.4" height="11.4" viewBox="0 0 9.6 9.6"><path d="M1.200,1.400h7.400v7h-7.400zM1.200,3.800h7.400M1.200,6.100h7.400M3.700,1.400v7M6.200,1.400v7" stroke="#333" stroke-width=".65" fill="none"/></svg>
<svg class="b" style="left:1026.6px;top:559.8px" width="11.4" height="11.4" viewBox="0 0 9.6 9.6"><path d="M4.800,1l3.800,3.800l-3.800,3.800l-3.800,-3.800z" stroke="#333" stroke-width=".65" fill="none"/><circle cx="4.800" cy="4.800" r="1.200" fill="#333"/><path d="M4.800,1v1.600M4.800,7v1.600M1,4.800h1.600M7,4.800h1.600" stroke="#333" stroke-width=".6"/></svg>
<svg class="b" style="left:1040.5px;top:559.8px" width="11.4" height="11.4" viewBox="0 0 9.6 9.6"><circle cx="4.800" cy="4.800" r="3.100" stroke="#444" stroke-width="1" fill="none" stroke-dasharray="1.300 .700"/><circle cx="4.800" cy="4.800" r="2.300" stroke="#444" stroke-width=".6" fill="none"/><circle cx="4.800" cy="4.800" r="1" stroke="#333" stroke-width=".65" fill="none"/></svg>
<div class="b " style="left:1056.6px;top:540px;width:1.4px;height:33px;background:#d8d8d8;"></div>
</div>
</div>
</body>
</html>
